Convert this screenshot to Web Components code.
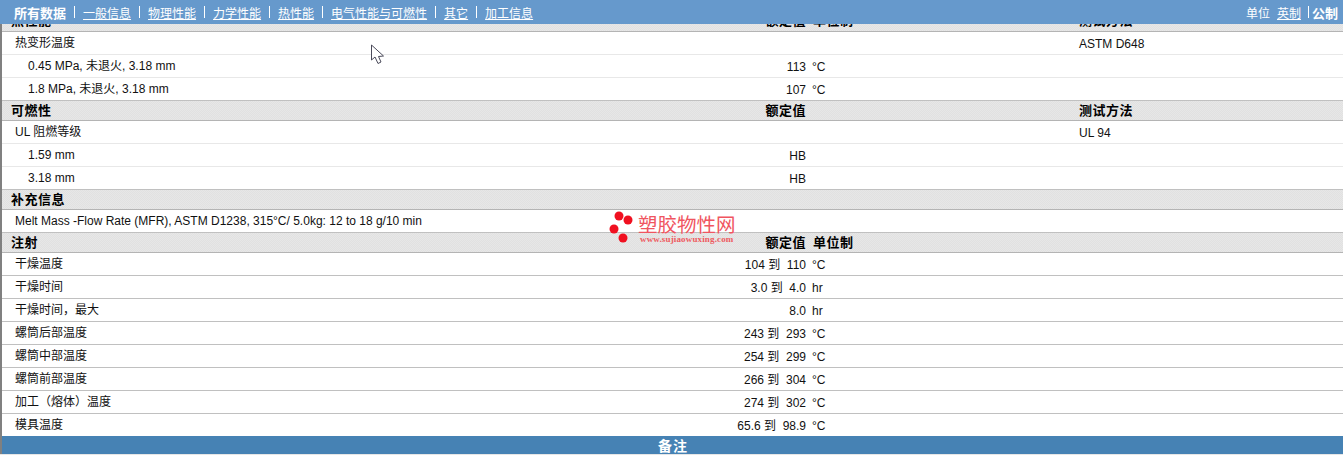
<!DOCTYPE html>
<html lang="zh">
<head>
<meta charset="utf-8">
<title>塑胶物性</title>
<style>
  html, body { margin: 0; padding: 0; background: #e6e6e6; }
  body {
    width: 1343px;
    height: 455px;
    overflow: hidden;
    position: relative;
    font-family: "Liberation Sans", "Noto Sans CJK SC", sans-serif;
    font-size: 12px;
    color: #111;
  }
</style>
</head>
<body>
<data-sheet>
  <top-bar slot="top"></top-bar>
  <sec-head value="额定值" unit="单位制" method="测试方法" style="height:21px">热性能</sec-head>
  <prop-row method="ASTM D648">热变形温度</prop-row>
  <prop-row indent value="113" unit="°C">0.45 MPa, 未退火, 3.18 mm</prop-row>
  <prop-row heavy indent value="107" unit="°C">1.8 MPa, 未退火, 3.18 mm</prop-row>
  <sec-head value="额定值" method="测试方法">可燃性</sec-head>
  <prop-row method="UL 94">UL 阻燃等级</prop-row>
  <prop-row indent value="HB">1.59 mm</prop-row>
  <prop-row heavy indent value="HB">3.18 mm</prop-row>
  <sec-head>补充信息</sec-head>
  <prop-row heavy>Melt Mass -Flow Rate (MFR), ASTM D1238, 315°C/ 5.0kg: 12 to 18 g/10 min</prop-row>
  <sec-head value="额定值" unit="单位制">注射</sec-head>
  <prop-row heavy value="104 到&nbsp; 110" unit="°C">干燥温度</prop-row>
  <prop-row heavy value="3.0 到&nbsp; 4.0" unit="hr">干燥时间</prop-row>
  <prop-row heavy value="8.0" unit="hr">干燥时间，最大</prop-row>
  <prop-row heavy value="243 到&nbsp; 293" unit="°C">螺筒后部温度</prop-row>
  <prop-row heavy value="254 到&nbsp; 299" unit="°C">螺筒中部温度</prop-row>
  <prop-row heavy value="266 到&nbsp; 304" unit="°C">螺筒前部温度</prop-row>
  <prop-row heavy value="274 到&nbsp; 302" unit="°C">加工（熔体）温度</prop-row>
  <prop-row last value="65.6 到&nbsp; 98.9" unit="°C">模具温度</prop-row>
  <foot-bar>备注</foot-bar>
</data-sheet>
<water-mark></water-mark>
<mouse-cursor></mouse-cursor>

<script>
const GRID = `
  display: grid;
  grid-template-columns: 660px 144px 273px 1fr;
  box-sizing: border-box;
  line-height: 14px;
`;

class DataSheet extends HTMLElement {
  connectedCallback() {
    const shadow = this.attachShadow({ mode: "open" });
    shadow.innerHTML = `
      <style>
        :host { display: block; position: relative; width: 1343px; height: 455px; overflow: hidden; }
        .rows { display: flex; flex-direction: column; padding-top: 11px; border-left: 2px solid #808080; background: #fff; height: 454px; box-sizing: border-box; }
      </style>
      <slot name="top"></slot>
      <div class="rows"><slot></slot></div>
    `;
  }
}

class TopBar extends HTMLElement {
  connectedCallback() {
    const shadow = this.attachShadow({ mode: "open" });
    const links = ["一般信息", "物理性能", "力学性能", "热性能", "电气性能与可燃性", "其它", "加工信息"];
    shadow.innerHTML = `
      <style>
        :host {
          position: absolute; top: 0; left: 0; right: 0; height: 24px; z-index: 5;
          display: flex; justify-content: space-between; align-items: center;
          background: #6699cc; color: #fff; padding: 0 5px 0 14px; box-sizing: border-box;
          font-size: 12px;
        }
        .tabs, .units { display: flex; align-items: center; }
        b { font-size: 13px; }
        a { color: #fff; text-decoration: underline; }
        .sep { width: 1px; height: 12px; background: #fff; margin: 0 8px; }
        .units .sep { margin: 0 3px 0 7px; }
        .units a { margin-left: 7px; }
      </style>
      <div class="tabs">
        <b>所有数据</b>
        ${links.map((l) => `<span class="sep"></span><a>${l}</a>`).join("")}
      </div>
      <div class="units">
        <span>单位</span><a>英制</a><span class="sep"></span><b>公制</b>
      </div>
    `;
  }
}

class SecHead extends HTMLElement {
  connectedCallback() {
    const shadow = this.attachShadow({ mode: "open" });
    const value = this.getAttribute("value") || "";
    const unit = this.getAttribute("unit") || "";
    const method = this.getAttribute("method") || "";
    shadow.innerHTML = `
      <style>
        :host {
          ${GRID}
          flex: none; height: 20px; align-items: center;
          background: repeating-conic-gradient(#e7e7e7 0 25%, #e1e1e1 0 50%) 0 0 / 2px 2px;
          border-bottom: 1px solid #b4b4b4;
          font-weight: bold; font-size: 13px; letter-spacing: .5px; color: #000;
        }
        .n { padding-left: 9px; }
        .v { text-align: right; white-space: nowrap; }
        .u { padding-left: 7px; }
      </style>
      <div class="n"><slot></slot></div>
      <div class="v">${value}</div>
      <div class="u">${unit}</div>
      <div>${method}</div>
    `;
  }
}

class PropRow extends HTMLElement {
  connectedCallback() {
    const shadow = this.attachShadow({ mode: "open" });
    const value = this.getAttribute("value") || "";
    const unit = this.getAttribute("unit") || "";
    const method = this.getAttribute("method") || "";
    const line = this.hasAttribute("heavy") ? "#c0c0c0" : "#e8e8e8";
    const last = this.hasAttribute("last");
    shadow.innerHTML = `
      <style>
        :host {
          ${GRID}
          flex: none; height: ${last ? 22 : 23}px; align-items: center;
          background: #fff; border-bottom: ${last ? "0" : `1px solid ${line}`};
          font-size: 12px; color: #111;
        }
        .n { padding-left: ${this.hasAttribute("indent") ? 26 : 13}px; white-space: nowrap; }
        .v { text-align: right; padding-top: 2px; white-space: nowrap; }
        .u { padding: 2px 0 0 6px; }
        .m { padding-top: 2px; }
      </style>
      <div class="n"><slot></slot></div>
      <div class="v">${value}</div>
      <div class="u">${unit}</div>
      <div class="m">${method}</div>
    `;
  }
}

class FootBar extends HTMLElement {
  connectedCallback() {
    const shadow = this.attachShadow({ mode: "open" });
    shadow.innerHTML = `
      <style>
        :host {
          flex: none; display: flex; justify-content: center; align-items: center;
          height: 18px; background: #4682b4; color: #fff;
          font-weight: bold; font-size: 14px; letter-spacing: 1px;
          padding-left: 1px;
        }
      </style>
      <slot></slot>
    `;
  }
}

class WaterMark extends HTMLElement {
  connectedCallback() {
    const shadow = this.attachShadow({ mode: "open" });
    shadow.innerHTML = `
      <style>
        :host { position: absolute; left: 608px; top: 209px; width: 130px; height: 36px; z-index: 3; display: block; }
        svg { position: absolute; left: 0; top: 0; }
        .t { position: absolute; left: 30px; top: 5px; font-size: 19.5px; line-height: 22px; color: #f0555f; white-space: nowrap; }
        .u { position: absolute; left: 32px; top: 25px; font: bold 9px/10px "Liberation Serif", serif; letter-spacing: .15px; color: #ee5a60; white-space: nowrap; }
      </style>
      <svg width="30" height="36" viewBox="0 0 30 36" fill="#f01020">
        <circle cx="11" cy="7" r="4.5"/>
        <circle cx="20" cy="11" r="4.5"/>
        <circle cx="6" cy="20" r="4.5"/>
        <circle cx="15" cy="29" r="4.5"/>
      </svg>
      <div class="t">塑胶物性网</div>
      <div class="u">www.sujiaowuxing.com</div>
    `;
  }
}

class MouseCursor extends HTMLElement {
  connectedCallback() {
    const shadow = this.attachShadow({ mode: "open" });
    shadow.innerHTML = `
      <style>
        :host { position: absolute; left: 370px; top: 44px; width: 16px; height: 21px; z-index: 6; display: block; }
      </style>
      <svg width="16" height="21" viewBox="0 0 16 21">
        <path d="M1.5 1 L1.5 16 L5 13 L8 19.5 L11 18 L8.5 12.5 L13.5 12 Z" fill="#fff" stroke="#4a4a5a" stroke-width="1"/>
      </svg>
    `;
  }
}

customElements.define("data-sheet", DataSheet);
customElements.define("top-bar", TopBar);
customElements.define("sec-head", SecHead);
customElements.define("prop-row", PropRow);
customElements.define("foot-bar", FootBar);
customElements.define("water-mark", WaterMark);
customElements.define("mouse-cursor", MouseCursor);
</script>
</body>
</html>
